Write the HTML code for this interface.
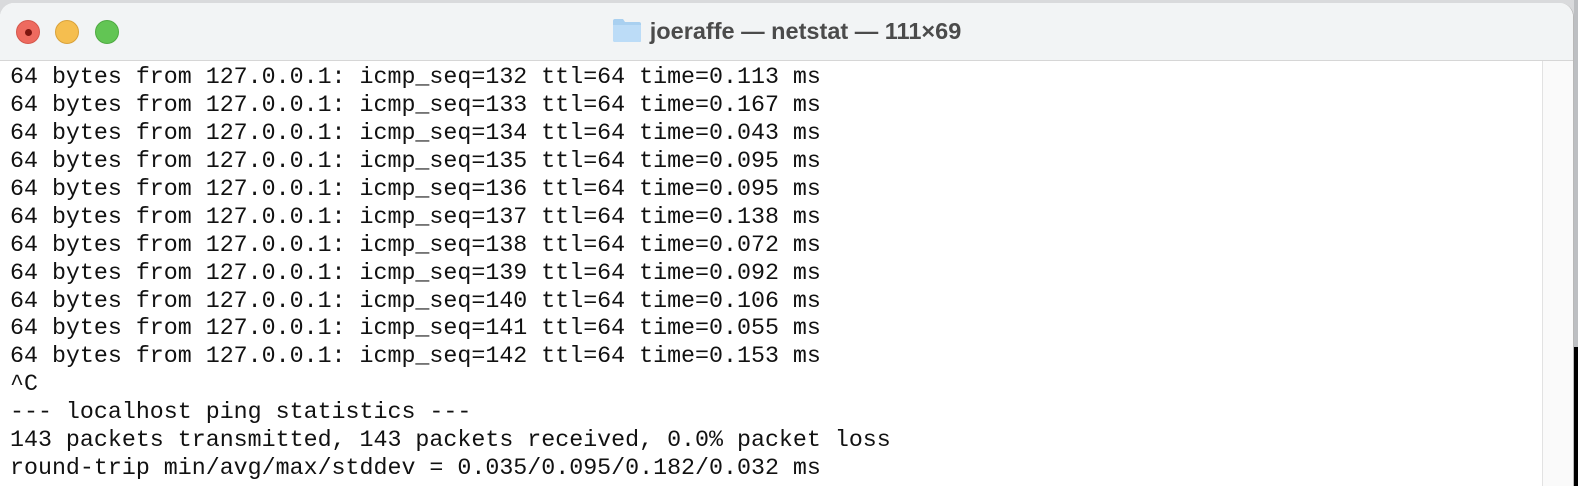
<!DOCTYPE html>
<html><head><style>
html,body{margin:0;padding:0;width:1578px;height:486px;overflow:hidden;background:#d9dadc;}
.rs{position:absolute;left:1574px;top:0;width:4px;height:486px;background:#bdbfc2}
.rs2{position:absolute;left:1574px;top:347px;width:4px;height:139px;background:#000}
.win{position:absolute;left:0;top:3px;width:1574px;height:483px;background:#fff;border-top-right-radius:14px;border-top-left-radius:14px;overflow:hidden;border-right:1px solid #b8b8b8;box-sizing:border-box}
.tb{position:absolute;left:0;top:0;width:100%;height:57px;background:#f2f4f5;border-bottom:1px solid #d6d6d6}
.dot{position:absolute;width:24px;height:24px;border-radius:50%;top:17px;box-sizing:border-box}
.title{position:absolute;left:0;width:100%;top:14px;text-align:center;font:bold 23.5px "Liberation Sans",sans-serif;color:#4b4b4b;}
.sb{position:absolute;left:1542px;top:58px;width:32px;height:430px;background:#fafafa;border-left:1px solid #e2e2e2}
pre{position:absolute;left:10px;top:64px;margin:0;font:23.3px/27.93px "Liberation Mono",monospace;color:#111;}
</style></head><body>
<div class="rs"></div><div class="rs2"></div>
<div class="win">
<div class="tb">
<div class="dot" style="left:16px;background:#ee6a5f;border:1px solid #d5574c"><div style="position:absolute;left:8px;top:8px;width:7px;height:7px;border-radius:50%;background:#7d1510"></div></div>
<div class="dot" style="left:55px;background:#f5be4f;border:1px solid #d9a23a"></div>
<div class="dot" style="left:95px;background:#62c554;border:1px solid #4faa42"></div>
<div class="title"><svg width="30" height="26" viewBox="0 0 30 26" style="vertical-align:-4px;margin-right:8px"><path d="M1 4 Q1 2 3 2 H11 L13 5 H27 Q29 5 29 7 V24 Q29 25 27 25 H3 Q1 25 1 23 Z" fill="#a9d0f0"/><path d="M1 8 H29 V23 Q29 25 27 25 H3 Q1 25 1 23 Z" fill="#bcdcf7"/></svg>joeraffe — netstat — 111×69</div>
</div>
<div class="sb"></div>
</div>
<pre>64 bytes from 127.0.0.1: icmp_seq=132 ttl=64 time=0.113 ms
64 bytes from 127.0.0.1: icmp_seq=133 ttl=64 time=0.167 ms
64 bytes from 127.0.0.1: icmp_seq=134 ttl=64 time=0.043 ms
64 bytes from 127.0.0.1: icmp_seq=135 ttl=64 time=0.095 ms
64 bytes from 127.0.0.1: icmp_seq=136 ttl=64 time=0.095 ms
64 bytes from 127.0.0.1: icmp_seq=137 ttl=64 time=0.138 ms
64 bytes from 127.0.0.1: icmp_seq=138 ttl=64 time=0.072 ms
64 bytes from 127.0.0.1: icmp_seq=139 ttl=64 time=0.092 ms
64 bytes from 127.0.0.1: icmp_seq=140 ttl=64 time=0.106 ms
64 bytes from 127.0.0.1: icmp_seq=141 ttl=64 time=0.055 ms
64 bytes from 127.0.0.1: icmp_seq=142 ttl=64 time=0.153 ms
^C
--- localhost ping statistics ---
143 packets transmitted, 143 packets received, 0.0% packet loss
round-trip min/avg/max/stddev = 0.035/0.095/0.182/0.032 ms</pre>
</body></html>
